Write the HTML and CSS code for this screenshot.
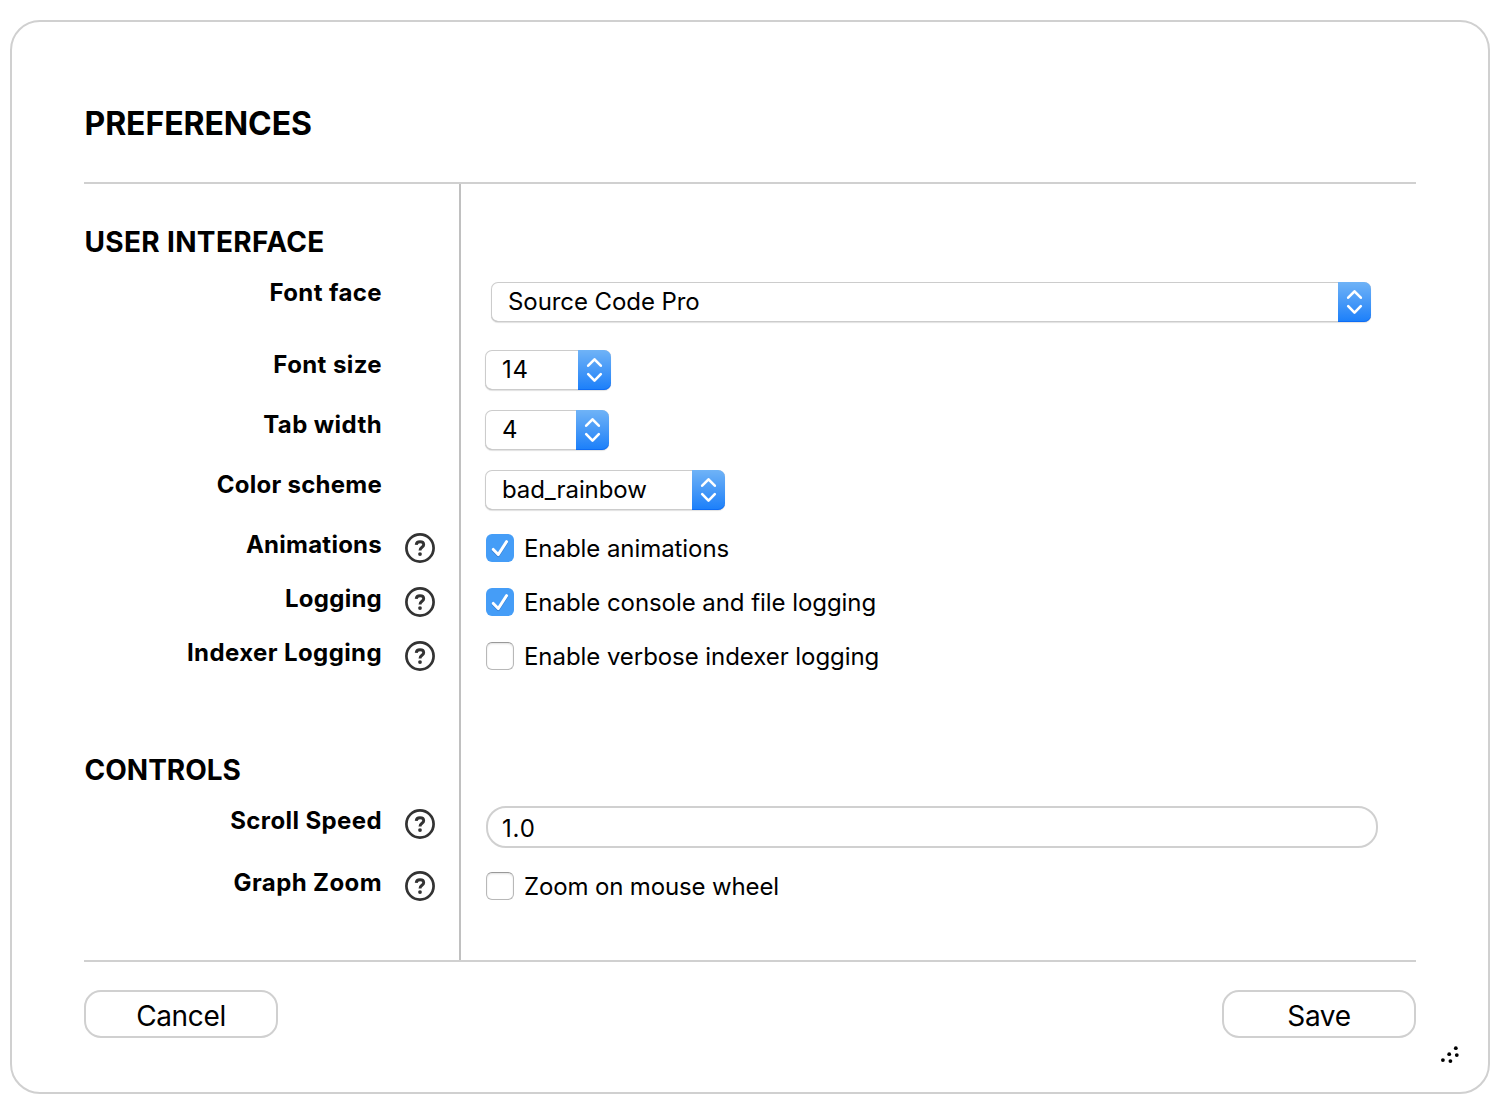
FILE: index.html
```html
<!DOCTYPE html>
<html lang="en">
<head>
<meta charset="utf-8">
<title>Preferences</title>
<link rel="stylesheet" href="styles.css">
</head>
<body>
<svg class="defs" width="0" height="0" aria-hidden="true">
  <symbol id="help" viewBox="0 0 30 30">
    <circle cx="15" cy="15" r="13.6" fill="none" stroke="#333" stroke-width="2.7"/>
    <path d="M11.2 11.9 C11.4 9.7 13 8.8 15 8.8 C17.1 8.8 18.7 9.9 18.7 11.7 C18.7 14.3 15 14.3 15 17.4" fill="none" stroke="#333" stroke-width="2.9"/>
    <circle cx="15" cy="21.1" r="1.9" fill="#333"/>
  </symbol>
  <symbol id="arrows" viewBox="0 0 33 40">
    <path d="M10.2 15.7 L16.5 9.3 L22.8 15.7 M10.2 24.2 L16.5 30.6 L22.8 24.2" fill="none" stroke="#fff" stroke-width="2.6" stroke-linecap="round" stroke-linejoin="round"/>
  </symbol>
  <symbol id="check" viewBox="0 0 28 28">
    <path d="M7.3 15.4 L12.2 20.6 L20.6 7.6" fill="none" stroke="#fff" stroke-width="2.9" stroke-linecap="round" stroke-linejoin="round"/>
  </symbol>
</svg>
<main class="dialog">
  <h1 class="title">PREFERENCES</h1>
  <div class="body">
    <section class="section">
      <h2 class="heading heading-wide">USER INTERFACE</h2>
      <div class="row row-font">
        <div class="label">Font face</div>
        <div class="field"><div class="select select-wide"><span class="value">Source Code Pro</span><span class="stepper"><svg><use href="#arrows"/></svg></span></div></div>
      </div>
      <div class="row row-select">
        <div class="label">Font size</div>
        <div class="field"><div class="select select-size"><span class="value">14</span><span class="stepper"><svg><use href="#arrows"/></svg></span></div></div>
      </div>
      <div class="row row-select">
        <div class="label">Tab width</div>
        <div class="field"><div class="select select-tab"><span class="value">4</span><span class="stepper"><svg><use href="#arrows"/></svg></span></div></div>
      </div>
      <div class="row row-select">
        <div class="label label-tight">Color scheme</div>
        <div class="field"><div class="select select-color"><span class="value">bad_rainbow</span><span class="stepper"><svg><use href="#arrows"/></svg></span></div></div>
      </div>
      <div class="row row-check">
        <div class="label label-tight">Animations</div><svg class="help"><use href="#help"/></svg>
        <div class="field"><div class="option"><span class="box checked"><svg><use href="#check"/></svg></span><span class="caption">Enable animations</span></div></div>
      </div>
      <div class="row row-check">
        <div class="label label-tight">Logging</div><svg class="help"><use href="#help"/></svg>
        <div class="field"><div class="option"><span class="box checked"><svg><use href="#check"/></svg></span><span class="caption">Enable console and file logging</span></div></div>
      </div>
      <div class="row row-check">
        <div class="label">Indexer Logging</div><svg class="help"><use href="#help"/></svg>
        <div class="field"><div class="option"><span class="box"></span><span class="caption">Enable verbose indexer logging</span></div></div>
      </div>
    </section>
    <section class="section section-controls">
      <h2 class="heading">CONTROLS</h2>
      <div class="row row-input">
        <div class="label">Scroll Speed</div><svg class="help"><use href="#help"/></svg>
        <div class="field"><input class="text-input" type="text" value="1.0" aria-label="Scroll Speed"></div>
      </div>
      <div class="row row-check">
        <div class="label">Graph Zoom</div><svg class="help"><use href="#help"/></svg>
        <div class="field"><div class="option"><span class="box"></span><span class="caption caption-tight">Zoom on mouse wheel</span></div></div>
      </div>
    </section>
  </div>
  <footer class="footer">
    <button class="button">Cancel</button>
    <button class="button">Save</button>
  </footer>
  <svg class="grip" viewBox="0 0 20 20">
    <circle cx="15.8" cy="3.2" r="1.9"/><circle cx="9.2" cy="9.2" r="1.9"/><circle cx="16.8" cy="10.1" r="1.9"/><circle cx="2.9" cy="15.1" r="1.9"/><circle cx="10.4" cy="16.1" r="1.9"/>
  </svg>
</main>
</body>
</html>
```
FILE: styles.css
```css
* { box-sizing: border-box; }
body {
  margin: 0;
  height: 1114px;
  padding: 20px 10px;
  background: #fff;
  color: #000;
  font: 24px/30px Inter, sans-serif;
}
.defs { display: block; }
.dialog {
  position: relative;
  height: 1074px;
  padding: 0 72px;
  border: 2px solid #d0d0d0;
  border-radius: 30px;
  background: #fff;
}
.title {
  height: 162px;
  margin: 0;
  padding: 82px 0 0 0.5px;
  border-bottom: 2px solid #d0d0d0;
  font-size: 32px;
  line-height: 40px;
  font-weight: 700;
  letter-spacing: -0.08px;
}
.body {
  height: 778px;
  padding-top: 41px;
  border-bottom: 2px solid #d0d0d0;
  background: linear-gradient(#c0c0c0, #c0c0c0) 375px 0 / 2px 100% no-repeat;
}
.section-controls { padding-top: 62px; }
.heading {
  margin: 0 0 18px;
  padding-left: 0.5px;
  font-size: 28px;
  line-height: 34px;
  font-weight: 700;
}
.heading-wide { letter-spacing: 0.33px; }
.row {
  display: grid;
  grid-template-columns: 298px 103px 1fr;
  align-items: start;
}
.row-font { height: 72px; }
.row-select { height: 60px; }
.row-check { height: 54px; }
.row-input { height: 62px; }
.label {
  padding-top: 1px;
  text-align: right;
  font-weight: 700;
  letter-spacing: 0.4px;
}
.label-tight { letter-spacing: 0.25px; }
.help {
  width: 30px;
  height: 30px;
  margin: 4px 0 0 23px;
}
.field { grid-column: 3; }
.select {
  display: flex;
  justify-content: space-between;
  height: 40px;
  margin-top: 1px;
  border-radius: 7px;
  background: #fff;
  box-shadow: inset 0 0 0 1px #ccc, inset 0 -1px 0 #b5b5b5, 0 1px 1px rgba(0, 0, 0, 0.12);
}
.select-wide { width: 880px; margin: 5px 0 0 6px; }
.select-size { width: 126px; }
.select-tab { width: 124px; }
.select-color { width: 240px; }
.value {
  padding-left: 17px;
  line-height: 39px;
  letter-spacing: -0.08px;
}
.select-size .value { letter-spacing: 0.8px; }
.stepper {
  width: 33px;
  height: 40px;
  border-radius: 0 7px 7px 0;
  background: linear-gradient(#6fb3f7, #4799f7 50%, #1b7ffa);
  box-shadow: inset 0 -1px 0 rgba(0, 90, 240, 0.5);
}
.stepper svg { display: block; width: 33px; height: 40px; }
.option {
  display: flex;
  gap: 10px;
  margin-top: 5px;
  padding-left: 1px;
  line-height: 30px;
}
.caption { letter-spacing: -0.06px; }
.caption-tight { letter-spacing: -0.14px; }
.box {
  width: 28px;
  height: 28px;
  border: 1px solid #b8b8b8;
  border-top-color: #999;
  border-radius: 6px;
  background: #fff;
  box-shadow: inset 0 1px 2px rgba(0, 0, 0, 0.12);
}
.box.checked {
  border: 0;
  background: #459df7;
  box-shadow: none;
}
.box svg {
  display: block;
  width: 28px;
  height: 28px;
  filter: drop-shadow(0 1px 0.5px rgba(0, 50, 130, 0.3));
}
.text-input {
  display: block;
  width: 892px;
  height: 42px;
  margin: 1px 0 0 1px;
  padding: 2px 14px 0;
  border: 2px solid #d0d0d0;
  border-radius: 20px;
  background: #fff;
  color: #000;
  font: 24px Inter, sans-serif;
  letter-spacing: 0.8px;
}
.footer {
  display: flex;
  justify-content: space-between;
  padding-top: 28px;
}
.button {
  width: 194px;
  height: 48px;
  padding: 3px 0 0;
  border: 2px solid #d0d0d0;
  border-radius: 17px;
  background: #fff;
  color: #000;
  font: 28px Inter, sans-serif;
  letter-spacing: -0.35px;
}
/* Resize handle in the dialog's corner */
.grip {
  position: absolute;
  right: 28px;
  bottom: 27px;
  width: 20px;
  height: 20px;
}
```
